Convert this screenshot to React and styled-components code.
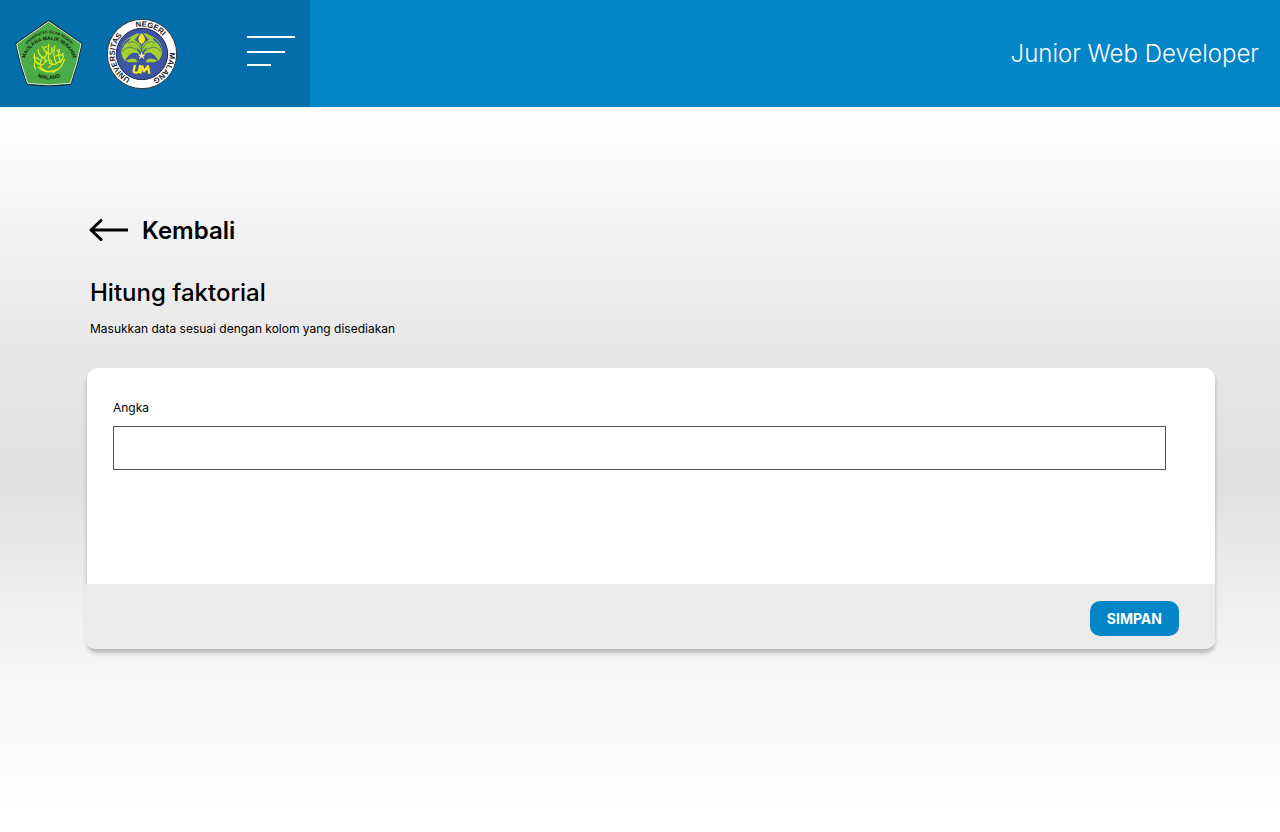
import React from "react";
import styled, { createGlobalStyle } from "styled-components";

const GlobalStyle = createGlobalStyle`
  *, *::before, *::after { box-sizing: border-box; }
  body {
    margin: 0;
    font-family: Inter, "Liberation Sans", sans-serif;
    color: #000;
    background: #fff;
  }
  h1, p { margin: 0; }
`;

const Page = styled.div`
  display: flex;
  flex-direction: column;
  min-height: 100vh;
`;

const Header = styled.header`
  display: flex;
  min-height: 107px;
  background: #0385c8;
`;

const Brand = styled.div`
  display: flex;
  align-items: center;
  flex: 0 0 310px;
  gap: 23px;
  padding: 1px 15px 0;
  background: #046eab;
`;

const Logo = styled.svg`
  display: block;
  flex: none;
  width: ${(p) => p.$size}px;
  height: ${(p) => p.$size}px;
  font-family: "Liberation Sans", sans-serif;
  font-weight: 700;
`;

const MenuButton = styled.button`
  display: flex;
  margin-left: auto;
  padding: 0 0 6px;
  border: 0;
  background: none;
  cursor: pointer;
`;

const Role = styled.p`
  flex: 1;
  align-self: center;
  padding-right: 21px;
  font-size: 24px;
  font-weight: 300;
  line-height: 30px;
  text-align: right;
  color: #fff;
`;

const Main = styled.main`
  flex: 1;
  padding: 108px 65px 64px 87px;
  background: linear-gradient(
    #fff 0%, #fcfcfc 6%, #f4f4f4 15%, #eee 23%, #e8e8e8 33%, #e4e4e4 42%,
    #e1e1e1 52%, #e8e8e8 60%, #eee 67%, #f3f3f3 74%, #f9f9f9 82%,
    #fcfcfc 91%, #fff 98%
  );
`;

const BackLink = styled.a`
  display: inline-flex;
  align-items: center;
  gap: 14px;
  padding-left: 2px;
  font-size: 24px;
  font-weight: 600;
  line-height: 32px;
  color: #000;
  text-decoration: none;
`;

const Intro = styled.div`
  padding: 31px 3px;
`;

const Title = styled.h1`
  font-size: 24px;
  font-weight: 500;
  line-height: 30px;
`;

const Description = styled.p`
  margin-top: 13px;
  font-size: 12px;
  line-height: 16px;
`;

const Card = styled.form`
  border-radius: 10px;
  background: #fff;
  box-shadow: 0 4px 4px rgba(0, 0, 0, 0.25);
`;

const CardBody = styled.div`
  min-height: 216px;
  padding: 32px 49px 32px 26px;
`;

const Label = styled.label`
  display: block;
  margin-bottom: 10px;
  font-size: 12px;
  line-height: 16px;
`;

const NumberInput = styled.input`
  display: block;
  width: 100%;
  height: 44px;
  padding: 0 12px;
  border: 1px solid #4f4f4f;
  border-radius: 0;
  background: #fff;
  font: inherit;
  font-size: 16px;
`;

const CardFooter = styled.div`
  display: flex;
  justify-content: flex-end;
  margin-left: -2px;
  padding: 17px 36px 13px;
  border-radius: 0 0 10px 10px;
  background: #ececec;
`;

const SaveButton = styled.button`
  height: 35px;
  padding: 0 17px;
  border: 0;
  border-radius: 10px;
  background: #0385c8;
  font: inherit;
  font-size: 14px;
  font-weight: 700;
  color: #fff;
  cursor: pointer;
`;

function UinLogo() {
  const outline =
    "M121 29 Q172 64 218 96 Q207 155 186 214 Q121 223 58 214 Q36 155 25 96 Q70 64 121 29 Z";
  return (
    <Logo $size={68} viewBox="20 24 204 204" role="img" aria-label="UIN Maulana Malik Ibrahim Malang">
      <defs>
        <path id="uin-top" d="M42 113 Q82 63 122 63 Q162 63 204 113" />
        <path id="uin-name" d="M46 150 C58 102 90 84 122 84 C154 84 186 102 198 150" />
        <path id="uin-city" d="M76 190 Q122 214 170 189" />
      </defs>
      <path d={outline} fill="#1b2a24" stroke="#1b2a24" strokeWidth="8" strokeLinejoin="round" />
      <path d={outline} fill="#4bab47" stroke="#dfe9df" strokeWidth="3" strokeLinejoin="round" />
      <g fill="#12240f" textAnchor="middle">
        <text fontSize="11">
          <textPath href="#uin-top" startOffset="50%">UNIVERSITAS ISLAM NEGERI</textPath>
        </text>
        <text fontSize="15">
          <textPath href="#uin-name" startOffset="50%">MAULANA MALIK IBRAHIM</textPath>
        </text>
        <text fontSize="16">
          <textPath href="#uin-city" startOffset="50%">MALANG</textPath>
        </text>
      </g>
      <g fill="none" stroke="#dcea1c" strokeWidth="4" strokeLinecap="round" strokeLinejoin="round">
        <path d="M78 126 Q74 150 96 158 Q112 160 111 142 Q104 130 98 144 Q88 170 118 178 Q158 180 168 142" />
        <path d="M89 112 Q91 132 104 136 Q116 138 114 118 M103 104 Q110 122 123 126 Q134 126 130 108" />
        <path d="M121 97 Q117 128 124 154 M139 102 Q132 130 144 154 M153 112 Q148 134 158 152" />
        <path d="M80 148 Q76 164 82 170 M90 165 Q112 190 150 172 M126 154 Q138 162 148 152 Q168 146 164 124" />
        <path d="M112 150 Q120 138 130 148 Q134 160 120 166 M144 132 Q154 124 160 130" />
        <path d="M82 136 L92 142 M134 182 L142 175 M108 108 L114 104 M146 114 L150 120" />
      </g>
    </Logo>
  );
}

function UmLogo() {
  return (
    <Logo $size={72} viewBox="18 18 216 216" role="img" aria-label="Universitas Negeri Malang">
      <defs>
        <path id="um-ring" d="M126 208 A82 82 0 1 1 127 208" />
      </defs>
      <circle cx="126" cy="126" r="104" fill="#fff" stroke="#333b40" strokeWidth="3" />
      <circle cx="126" cy="126" r="77" fill="#3d55a4" stroke="#1f2c55" strokeWidth="3" />
      <g fill="#1b1b1b" fontSize="23" textAnchor="middle">
        <text><textPath href="#um-ring" startOffset="22%">UNIVERSITAS</textPath></text>
        <text><textPath href="#um-ring" startOffset="55%">NEGERI</textPath></text>
        <text><textPath href="#um-ring" startOffset="84%">MALANG</textPath></text>
      </g>
      <g fill="#a3d02a">
        <path d="M121 64 Q94 64 86 91 Q104 81 117 94 Q125 101 124 116 Q118 94 103 84 Z" />
        <path d="M129 64 Q156 64 164 91 Q146 81 133 94 Q125 101 126 116 Q132 94 147 84 Z" />
        <path d="M96 76 Q65 86 64 119 Q84 98 106 110 Q119 117 120 129 Q102 114 91 126 Q76 132 75 147 Q94 134 110 143 L112 151 L86 151 Q58 135 64 107 Q72 82 96 72 Z" />
        <path d="M154 76 Q185 86 186 119 Q166 98 144 110 Q131 117 130 129 Q148 114 159 126 Q174 132 175 147 Q156 134 140 143 L138 151 L164 151 Q192 135 186 107 Q178 82 154 72 Z" />
        <path d="M91 84 Q110 80 120 101 L124 121 Q108 98 86 101 Q73 105 66 116 Q70 94 91 84 Z" />
        <path d="M159 84 Q140 80 130 101 L126 121 Q142 98 164 101 Q177 105 184 116 Q180 94 159 84 Z" />
        <path d="M66 112 Q84 92 108 104 L118 124 Q98 118 88 128 L74 146 Q62 132 66 112 Z" />
        <path d="M184 112 Q166 92 142 104 L132 124 Q152 118 162 128 L176 146 Q188 132 184 112 Z" />
      </g>
      <g fill="none" stroke="#3a5a86" strokeWidth="2">
        <path d="M66 119 Q89 90 121 123 M84 93 Q109 79 123 113" />
        <path d="M184 119 Q161 90 129 123 M166 93 Q141 79 127 113" />
      </g>
      <path d="M125 63 Q146 84 125 97 Q104 84 125 63 Z" fill="#f3e819" />
      <path d="M125 119 L128 128 L137 128 L130 133 L133 142 L125 136 L117 142 L120 133 L113 128 L122 128 Z" fill="#f8f39a" />
      <g fill="none" stroke="#f6e916" strokeWidth="7" strokeLinejoin="round">
        <path d="M105 159 L101 175 Q100 182 106 182 L110 182 Q115 182 117 176 L121 159" />
        <path d="M120 185 L127 163 L132 178 L144 163 L148 185" />
      </g>
    </Logo>
  );
}

function MenuIcon() {
  return (
    <svg width="48" height="30" viewBox="0 0 48 30" fill="#fff" aria-hidden="true">
      <rect width="48" height="2" />
      <rect y="15" width="38" height="2" />
      <rect y="28" width="24" height="2" />
    </svg>
  );
}

function BackArrow() {
  return (
    <svg width="39" height="24" viewBox="0 0 39 24" fill="none" stroke="#000" strokeWidth="3" aria-hidden="true">
      <path d="M12 1.5 L2 11 L12 20.5" strokeLinecap="round" strokeLinejoin="round" />
      <path d="M2 11 H39" />
    </svg>
  );
}

export default function App() {
  return (
    <>
      <GlobalStyle />
      <Page>
        <Header>
          <Brand>
            <UinLogo />
            <UmLogo />
            <MenuButton type="button" aria-label="Menu">
              <MenuIcon />
            </MenuButton>
          </Brand>
          <Role>Junior Web Developer</Role>
        </Header>
        <Main>
          <BackLink href="#">
            <BackArrow />
            Kembali
          </BackLink>
          <Intro>
            <Title>Hitung faktorial</Title>
            <Description>Masukkan data sesuai dengan kolom yang disediakan</Description>
          </Intro>
          <Card onSubmit={(event) => event.preventDefault()}>
            <CardBody>
              <Label htmlFor="angka">Angka</Label>
              <NumberInput id="angka" name="angka" type="text" inputMode="numeric" />
            </CardBody>
            <CardFooter>
              <SaveButton type="submit">SIMPAN</SaveButton>
            </CardFooter>
          </Card>
        </Main>
      </Page>
    </>
  );
}
